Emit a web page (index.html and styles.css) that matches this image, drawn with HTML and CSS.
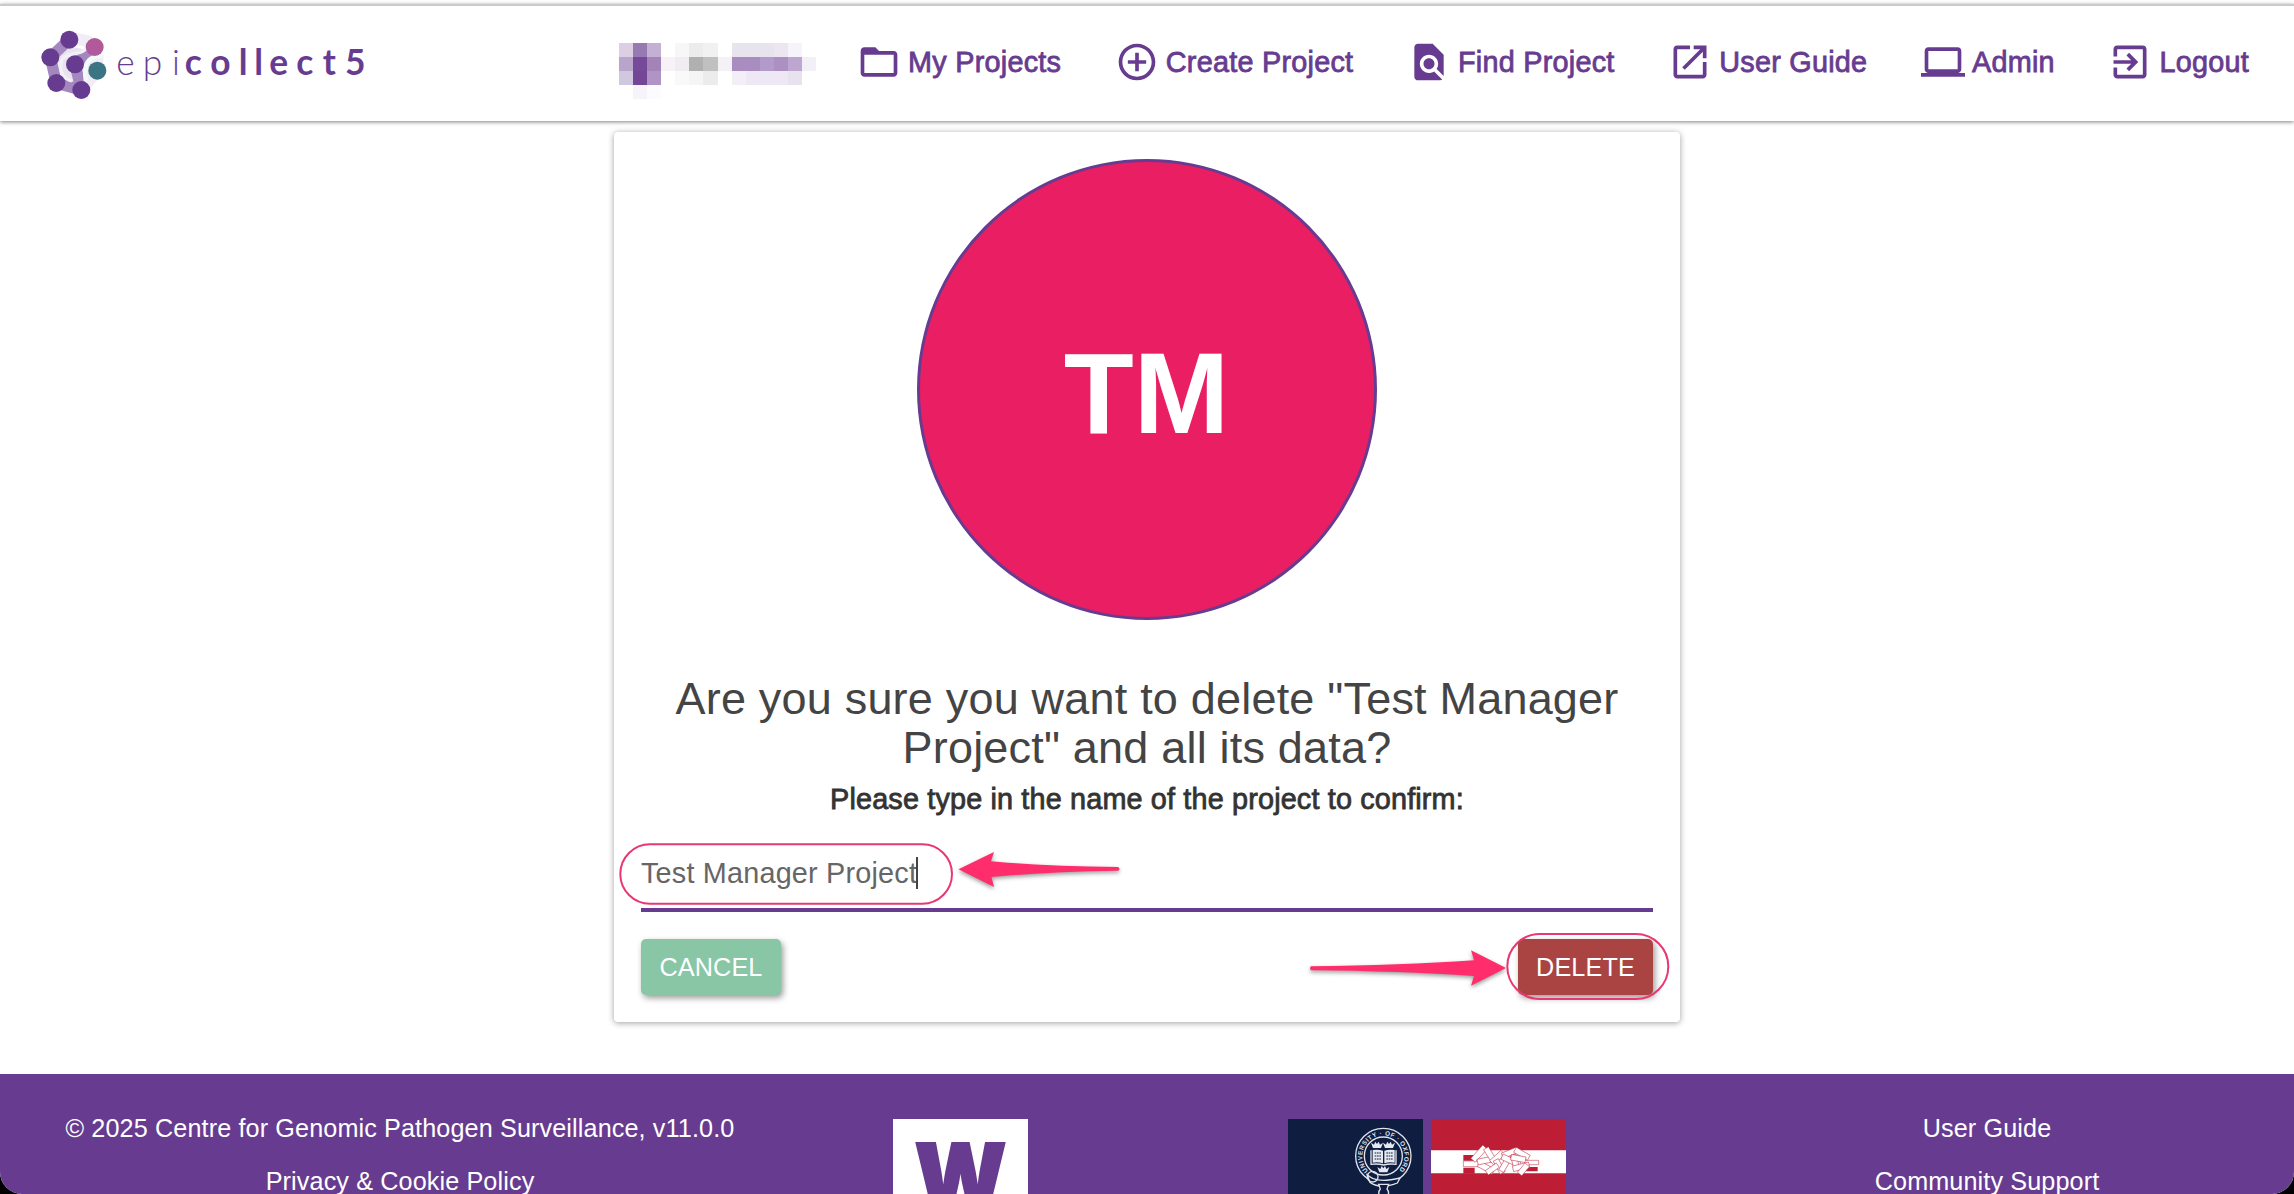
FILE: index.html
```html
<!DOCTYPE html>
<html lang="en">
<head>
<meta charset="utf-8">
<title>Epicollect5 - Delete project</title>
<link rel="stylesheet" href="styles.css">
</head>
<body>
<div class="window">
  <header class="navbar">
    <svg class="brand" viewBox="0 0 1200 345" role="img" aria-label="epicollect5">
      <g transform="translate(0 -18)">
        <path d="M208 119 Q262 112 284 141 M292 212 L292 165 M292 212 L244 270" stroke="#f1ecf5" stroke-width="36" fill="none"/>
        <circle cx="225" cy="193" r="50" fill="#e9e3f0"/>
        <path d="M208 119 L151 172 L169 249 L244 270 L225 193 L284 141" fill="none" stroke="#a487bf" stroke-width="34" stroke-linejoin="round"/>
        <path d="M262 140 C248 172 188 150 183 190 C180 215 190 236 216 243" fill="none" stroke="#f3eff7" stroke-width="10"/>
        <path d="M306 168 C262 166 250 196 258 243" fill="none" stroke="#f2f9fa" stroke-width="14"/>
        <g fill="#673c90"><circle cx="208" cy="119" r="27"/><circle cx="151" cy="172" r="27"/><circle cx="169" cy="249" r="27"/><circle cx="244" cy="270" r="27"/><circle cx="225" cy="193" r="27"/></g>
        <circle cx="284" cy="141" r="27" fill="#b05a9c"/><circle cx="292" cy="212" r="27" fill="#3b7482"/>
        <text class="brand-thin" y="224" x="349 428 516">epi</text>
        <text class="brand-bold" y="224" x="554 631 716 763 808 889 968 1035">collect5</text>
      </g>
    </svg>
    <nav class="menu">
      <svg class="user-mask" viewBox="0 0 14 4" preserveAspectRatio="none" shape-rendering="crispEdges">
        <g><path fill="#dccfe4" d="M0 0h1v1H0z"/><path fill="#987ab3" d="M1 0h1v1H1z"/><path fill="#c5b0d5" d="M2 0h1v1H2z"/><path fill="#f8f7f8" d="M4 0h1v1H4z"/><path fill="#ececec" d="M5 0h1v1H5z"/><path fill="#f1f1f1" d="M6 0h1v1H6z"/><path fill="#e8e4ee" d="M8 0h3v1H8z"/><path fill="#ece6f1" d="M11 0h1v1h-1z"/><path fill="#f6f3fa" d="M12 0h1v1h-1z"/></g>
        <g><path fill="#b9a5cb" d="M0 1h1v1H0z"/><path fill="#754b99" d="M1 1h1v1H1z"/><path fill="#a284b9" d="M2 1h1v1H2z"/><path fill="#f7f1f8" d="M3 1h1v1H3z"/><path fill="#f0ecf0" d="M4 1h1v1H4z"/><path fill="#b0b0b0" d="M5 1h1v1H5z"/><path fill="#c0c0c0" d="M6 1h1v1H6z"/><path fill="#f5f2f7" d="M7 1h1v1H7z"/><path fill="#a98dc1" d="M8 1h2v1H8z"/><path fill="#b29bca" d="M10 1h1v1h-1z"/><path fill="#ac90c4" d="M11 1h1v1h-1z"/><path fill="#bda7d0" d="M12 1h1v1h-1z"/><path fill="#f2eff7" d="M13 1h1v1h-1z"/></g>
        <g><path fill="#d1c7de" d="M0 2h1v1H0z"/><path fill="#744695" d="M1 2h1v1H1z"/><path fill="#b094c5" d="M2 2h1v1H2z"/><path fill="#f9f9f9" d="M4 2h1v1H4z"/><path fill="#f5f5f5" d="M5 2h1v1H5z"/><path fill="#ececec" d="M6 2h1v1H6z"/><path fill="#f3eff7" d="M8 2h1v1H8z"/><path fill="#eee8f4" d="M9 2h3v1H9z"/><path fill="#e8e2ee" d="M12 2h1v1h-1z"/><path fill="#f6f4fa" d="M1 3h1v1H1z"/><path fill="#fcfbfd" d="M2 3h1v1H2z"/></g>
      </svg>
      <a class="menu-item"><svg viewBox="0 0 24 24"><path d="M20 6h-8l-2-2H4c-1.100 0-1.990.9-1.990 2L2 18c0 1.100.9 2 2 2h16c1.100 0 2-.9 2-2V8c0-1.100-.9-2-2-2zm0 12H4V8h16v10z"/></svg>My Projects</a>
      <a class="menu-item"><svg viewBox="0 0 24 24"><path d="M13 7h-2v4H7v2h4v4h2v-4h4v-2h-4V7zm-1-5C6.480 2 2 6.480 2 12s4.480 10 10 10 10-4.480 10-10S17.520 2 12 2zm0 18c-4.410 0-8-3.590-8-8s3.590-8 8-8 8 3.590 8 8-3.590 8-8 8z"/></svg>Create Project</a>
      <a class="menu-item"><svg viewBox="0 0 24 24"><path d="M20 19.590V8l-6-6H6c-1.100 0-1.990.9-1.990 2L4 20c0 1.100.89 2 1.990 2H18c.45 0 .85-.15 1.190-.4l-4.430-4.430c-.8.520-1.740.83-2.760.83-2.760 0-5-2.240-5-5s2.240-5 5-5 5 2.240 5 5c0 1.020-.31 1.960-.83 2.750L20 19.590zM9 13c0 1.660 1.340 3 3 3s3-1.340 3-3-1.340-3-3-3-3 1.340-3 3z"/></svg>Find Project</a>
      <a class="menu-item"><svg viewBox="0 0 24 24"><path d="M19 19H5V5h7V3H5c-1.110 0-2 .9-2 2v14c0 1.100.89 2 2 2h14c1.100 0 2-.9 2-2v-7h-2v7zM14 3v2h3.590l-9.830 9.830 1.410 1.410L19 6.410V10h2V3h-7z"/></svg>User Guide</a>
      <a class="menu-item"><svg viewBox="0 0 24 24"><path d="M20 18c1.100 0 1.990-.9 1.990-2L22 6c0-1.100-.9-2-2-2H4c-1.100 0-2 .9-2 2v10c0 1.100.9 2 2 2H0v2h24v-2h-4zM4 6h16v10H4V6z"/></svg>Admin</a>
      <a class="menu-item"><svg viewBox="0 0 24 24"><path d="M10.090 15.590L11.500 17l5-5-5-5-1.410 1.410L12.670 11H3v2h9.670l-2.580 2.590zM19 3H5c-1.110 0-2 .9-2 2v4h2V5h14v14H5v-4H3v4c0 1.100.89 2 2 2h14c1.100 0 2-.9 2-2V5c0-1.100-.9-2-2-2z"/></svg>Logout</a>
    </nav>
  </header>

  <main class="content">
    <section class="card">
      <div class="avatar">TM</div>
      <h1 class="question">Are you sure you want to delete "Test Manager<br>Project" and all its data?</h1>
      <p class="prompt">Please type in the name of the project to confirm:</p>
      <div class="field"><span>Test Manager Project</span><i class="caret"></i></div>
      <div class="actions"><button class="btn btn-cancel">CANCEL</button><button class="btn btn-delete">DELETE</button></div>
    </section>
  </main>

  <footer class="footer">
    <div class="links"><a>© 2025 Centre for Genomic Pathogen Surveillance, v11.0.0</a><a>Privacy &amp; Cookie Policy</a></div>
    <div class="logos">
      <svg class="logo" viewBox="0 0 135 135"><path fill="#fff" d="M0 0h135v135H0z"/><text class="wellcome" x="67.500" y="92" text-anchor="middle" textLength="92" lengthAdjust="spacingAndGlyphs">W</text></svg>
    </div>
    <div class="logos">
      <svg class="logo" viewBox="0 0 405 405">
        <path fill="#0f1d40" d="M0 0h405v405H0z"/>
        <g fill="none" stroke="#dfe3ec">
          <circle cx="286" cy="111" r="83" stroke-width="4"/><circle cx="286" cy="111" r="57" stroke-width="4"/>
        </g>
        <path id="ring" d="M241 156 A63 63 0 1 1 331 156" fill="none"/>
        <text class="crest-text"><textPath href="#ring" textLength="292">UNIVERSITY · OF · OXFORD</textPath></text>
        <path fill="#e4e8f0" d="M254 93q16-3 31 2v38q-15-5-31-2zM289 95q15-5 31-2v38q-16-3-31 2z"/>
        <path fill="none" stroke="#dfe3ec" stroke-width="4" d="M249 94v42q20-3 38 2q18-5 37-2V94"/>
        <path stroke="#0f1d40" stroke-width="3" stroke-dasharray="5 2" d="M260 102h19M260 111h19M260 120h19M295 102h19M295 111h19M295 120h19"/>
        <g fill="#e4e8f0"><path id="crown" d="M255 87l-6-16 9 6 4-9 5 7 5-7 4 9 9-6-6 16z"/><use href="#crown" x="36"/><use href="#crown" x="19" y="73"/></g>
        <path d="M236 164q22 32 100 13l-8 15q-50 20-82-2z" fill="#0f1d40" stroke="#dfe3ec" stroke-width="4"/>
        <circle cx="254" cy="173" r="16" fill="none" stroke="#dfe3ec" stroke-width="4"/>
        <path d="M272 196h30l-5 14q10 12-1 23h-18q-11-11-1-23z" fill="#0f1d40" stroke="#dfe3ec" stroke-width="4"/>
      </svg>
      <svg class="logo" viewBox="0 0 405 405">
        <path fill="#be1e35" d="M0 0h405v405H0z"/><path fill="#fff" d="M0 94h405v69H0z"/>
        <path fill="#be1e35" d="M97 108h40v17H97zM97 146h34v18H97zM282 144h38v13h-38z"/>
        <g fill="#fff" stroke="#be1e35" stroke-width="1.500">
          <path d="M97 126h50v17H97zM268 124h55v13h-55z"/>
          <rect x="-27" y="-9" width="54" height="18" transform="translate(144 104) rotate(-48)"/>
          <rect x="-25" y="-9" width="50" height="18" transform="translate(165 146) rotate(28)"/>
          <rect x="-24" y="-8" width="48" height="17" transform="translate(163 124) rotate(-12)"/>
          <rect x="-22" y="-8" width="44" height="17" transform="translate(177 106) rotate(58)"/>
          <rect x="-23" y="-9" width="46" height="18" transform="translate(199 116) rotate(-42)"/>
          <rect x="-22" y="-8" width="44" height="17" transform="translate(205 142) rotate(62)"/>
          <rect x="-22" y="-8" width="44" height="17" transform="translate(221 137) rotate(-60)"/>
          <rect x="-24" y="-8" width="48" height="17" transform="translate(236 101) rotate(-22)"/>
          <rect x="-23" y="-8" width="46" height="17" transform="translate(234 122) rotate(25)"/>
          <rect x="-24" y="-8" width="48" height="17" transform="translate(273 104) rotate(30)"/>
          <rect x="-22" y="-8" width="44" height="17" transform="translate(253 130) rotate(75)"/>
          <rect x="-25" y="-8" width="50" height="17" transform="translate(270 143) rotate(-14)"/>
          <rect x="-18" y="-8" width="36" height="17" transform="translate(277 151) rotate(-50)"/>
          <rect x="-22" y="-8" width="44" height="17" transform="translate(262 118) rotate(10)"/>
          <rect x="-20" y="-8" width="40" height="16" transform="translate(184 150) rotate(-35)"/>
        </g>
      </svg>
    </div>
    <div class="links"><a>User Guide</a><a>Community Support</a></div>
  </footer>

  <svg class="annotations" viewBox="0 0 2294 1194">
    <g fill="none" stroke="#e8386f" stroke-width="2">
      <rect x="620.300" y="844.300" width="331.700" height="59.400" rx="29.700"/>
      <rect x="1507.300" y="934" width="161" height="65" rx="32.500"/>
    </g>
    <g class="arrows">
      <path d="M958.500 869.300L994 852L991 861.300Q1050 866.500 1118 867Q1121 869 1118 870.700Q1050 871.500 991.500 877L994 887Z"/>
      <path d="M1506 968L1471 950.300L1474 960.300Q1400 965.500 1311 966.300Q1309 968.300 1311 970.300Q1400 971 1474 976L1471 985.700Z"/>
    </g>
  </svg>
</div>
</body>
</html>
```
FILE: styles.css
```css
* { box-sizing: border-box; }
body {
  margin: 0;
  background: #000;
  font-family: "Liberation Sans", Arial, sans-serif;
}
.window {
  position: relative;
  display: flex;
  flex-direction: column;
  height: 1194px;
  overflow: hidden;
  background: #fff;
  border-radius: 0 0 22px 22px;
}

/* header */
.navbar {
  flex: none;
  display: flex;
  justify-content: space-between;
  margin-top: 4px;
  height: 117px;
  border-top: 2px solid #cacaca;
  padding-right: 45px;
  background: #fff;
  box-shadow: 0 1px 4px rgba(0, 0, 0, .5);
}
.brand { width: 400px; height: 115px; }
.brand-thin { font: 300 106px Lato, sans-serif; fill: #673c90; }
.brand-bold { font: 700 106px Lato, sans-serif; fill: #673c90; }
.menu {
  display: flex;
  align-items: center;
  gap: 53.600px;
  padding-bottom: 2px;
}
.user-mask { width: 197px; height: 56px; margin: 16px -13px 0 0; }
.menu-item {
  display: flex;
  align-items: center;
  gap: 7px;
  font-size: 28.8px;
  letter-spacing: .25px;
  color: #673c90;
  white-space: nowrap;
  -webkit-text-stroke: .8px #673c90;
}
.menu-item svg { width: 44px; height: 44px; margin-top: -2px; fill: #673c90; stroke: none; }

/* confirmation card */
.content {
  flex: none;
  display: flex;
  justify-content: center;
  height: 953px;
  padding-top: 11px;
}
.card {
  display: flex;
  flex-direction: column;
  width: 1066px;
  height: 890px;
  padding: 27px 27px 0;
  background: #fff;
  border-radius: 4px;
  box-shadow: 0 1px 6px rgba(0, 0, 0, .38);
}
.avatar {
  flex: none;
  align-self: center;
  display: flex;
  align-items: center;
  justify-content: center;
  width: 460px;
  height: 461px;
  padding: 7px 1px 0 0;
  border: 3px solid #673c90;
  border-radius: 50%;
  background: #e91e63;
  color: #fff;
  font-size: 114.500px;
  font-weight: 700;
  line-height: 1;
}
.question {
  margin: 54px 0 0;
  font-size: 45px;
  font-weight: 400;
  line-height: 49px;
  letter-spacing: .2px;
  text-align: center;
  color: #444;
}
.prompt {
  margin: 10px 0 0;
  font-size: 28.8px;
  line-height: 34px;
  letter-spacing: .16px;
  text-align: center;
  color: #333;
  -webkit-text-stroke: .8px #333;
}
.field {
  display: flex;
  align-items: center;
  height: 79px;
  margin-top: 17px;
  padding-top: 5px;
  border-bottom: 4px solid #673c90;
  font-size: 28.8px;
  letter-spacing: .2px;
  color: #666;
}
.caret { width: 2px; height: 32px; margin-left: -1px; background: #444; }
.actions { display: flex; justify-content: space-between; margin-top: 27px; }
.btn {
  height: 56px;
  padding: 0;
  border: 0;
  border-radius: 5px;
  color: #fff;
  font: 25.2px "Liberation Sans", Arial, sans-serif;
  box-shadow: 2px 3px 6px rgba(0, 0, 0, .4);
}
.btn-cancel { width: 140px; letter-spacing: .15px; background: #88c6a5; }
.btn-delete { width: 135px; letter-spacing: .15px; background: #a94442; }

/* footer */
.footer {
  flex: none;
  display: grid;
  grid-template-columns: 800px 321px 612px 508px;
  height: 120px;
  overflow: hidden;
  background: #673c90;
  color: #fff;
}
.links {
  display: flex;
  flex-direction: column;
  align-items: center;
  padding-top: 28px;
  font-size: 25.2px;
  letter-spacing: .12px;
  line-height: 53px;
  white-space: nowrap;
}
.logos { display: flex; justify-content: center; gap: 8px; padding-top: 45px; }
.logo { flex: none; width: 135px; height: 135px; }
.wellcome { font: 900 93px Inter, sans-serif; fill: #673c90; stroke: #673c90; stroke-width: 2px; }
.crest-text { font: 700 19px "Liberation Sans", sans-serif; fill: #dfe3ec; }

/* callouts drawn over the page */
.annotations { position: absolute; inset: 0; width: 2294px; height: 1194px; pointer-events: none; }
.arrows { fill: #ff2d6b; filter: drop-shadow(0 2px 2px rgba(0, 0, 0, .4)); }
```
